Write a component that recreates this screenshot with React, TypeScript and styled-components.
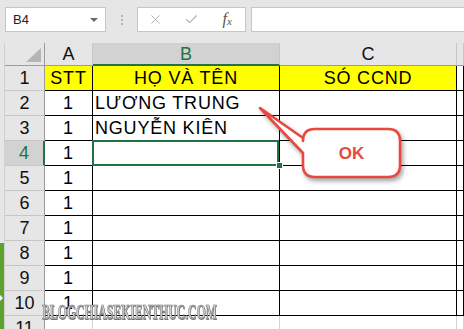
import React from 'react';
import styled, { createGlobalStyle, css } from 'styled-components';
import { X, Check } from 'lucide-react';

const GlobalStyle = createGlobalStyle`
    html, body {
        margin: 0;
        padding: 0;
        width: 464px;
        height: 329px;
        overflow: hidden;
        background: #ffffff;
        font-family: "Liberation Sans", Arial, sans-serif;
    }
`;

const GREEN = '#217346';
const RED = '#e8493f';

const Page = styled.div`
    position: relative;
    width: 464px;
    height: 329px;
    overflow: hidden;
`;

const TopBar = styled.div`
    height: 43px;
    box-sizing: border-box;
    background: #e6e6e6;
    display: flex;
    align-items: flex-start;
    padding: 7px 0 0 5px;
`;

const NameBox = styled.div`
    width: 101px;
    height: 25px;
    box-sizing: border-box;
    background: #ffffff;
    border: 1px solid #c6c6c6;
    display: flex;
    align-items: center;
    justify-content: space-between;
    padding: 0 7px 0 7px;
    font-size: 13px;
    color: #222;
`;

const Caret = styled.span`
    width: 0;
    height: 0;
    border-left: 4px solid transparent;
    border-right: 4px solid transparent;
    border-top: 4px solid #6a6a6a;
`;

const Grip = styled.div`
    width: 31px;
    height: 25px;
    display: flex;
    flex-direction: column;
    align-items: center;
    justify-content: center;
    gap: 2px;

    span {
        width: 2px;
        height: 2px;
        background: #b4b4b4;
    }
`;

const FxBox = styled.div`
    width: 109px;
    height: 25px;
    box-sizing: border-box;
    background: #ffffff;
    border: 1px solid #c6c6c6;
    display: flex;
`;

const FxSlot = styled.div`
    width: 36px;
    display: flex;
    align-items: center;
    justify-content: center;
    color: #b0b0b0;
`;

const FxLabel = styled.span`
    font-family: "Liberation Serif", "Times New Roman", serif;
    font-style: italic;
    font-size: 16px;
    color: #555;
    margin-top: -2px;

    sub {
        font-size: 11px;
        vertical-align: -1px;
    }
`;

const FormulaInput = styled.div`
    flex: 1;
    height: 25px;
    box-sizing: border-box;
    margin-left: 5px;
    margin-right: -4px;
    background: #ffffff;
    border: 1px solid #c6c6c6;
`;

const SheetArea = styled.div`
    display: flex;
    height: 286px;
`;

const LeftStrip = styled.div`
    width: 5px;
    display: flex;
    flex-direction: column;
    background: #e6e6e6;
    border-right: 1px solid #d0d0d0;
    box-sizing: border-box;
`;

const GreenTab = styled.div`
    margin-top: 200px;
    flex: 1;
    background: #5ea12f;
    position: relative;

    &::after {
        content: '';
        position: absolute;
        left: 0;
        top: 52px;
        border-top: 3px solid transparent;
        border-bottom: 3px solid transparent;
        border-left: 3px solid #ffffff;
    }
`;

const Grid = styled.div`
    flex: 1;
    display: grid;
    grid-template-columns: 40px 48px 187px 177px 1fr;
    grid-template-rows: 23px repeat(11, 25px);
    font-size: 18px;
    color: #000;
`;

const CornerCell = styled.div`
    background: #e6e6e6;
    border-right: 1px solid #9b9b9b;
    border-bottom: 1px solid #9b9b9b;
    position: relative;

    &::after {
        content: '';
        position: absolute;
        right: 3px;
        bottom: 3px;
        border-left: 15px solid transparent;
        border-bottom: 14px solid #b5b5b5;
    }
`;

const ColHeader = styled.div<{ $selected?: boolean }>`
    background: ${p => (p.$selected ? '#d2d2d2' : '#e6e6e6')};
    color: ${p => (p.$selected ? GREEN : '#111')};
    border-right: 1px solid #c6c6c6;
    border-bottom: ${p => (p.$selected ? `2px solid ${GREEN}` : '1px solid #9b9b9b')};
    display: flex;
    align-items: center;
    justify-content: center;
    padding-top: 1px;
    box-sizing: border-box;
`;

const RowHeader = styled.div<{ $selected?: boolean }>`
    background: ${p => (p.$selected ? '#d2d2d2' : '#e6e6e6')};
    color: ${p => (p.$selected ? GREEN : '#111')};
    border-bottom: 1px solid #c6c6c6;
    border-right: ${p => (p.$selected ? `2px solid ${GREEN}` : '1px solid #9b9b9b')};
    display: flex;
    align-items: center;
    justify-content: center;
    box-sizing: border-box;
`;

const Cell = styled.div<{ $yellow?: boolean; $align?: 'left' | 'center'; $ghost?: boolean; $selected?: boolean }>`
    position: relative;
    display: flex;
    align-items: center;
    justify-content: ${p => (p.$align === 'left' ? 'flex-start' : 'center')};
    padding-left: ${p => (p.$align === 'left' ? '2px' : '0')};
    background: ${p => (p.$yellow ? '#ffff00' : '#ffffff')};
    letter-spacing: 0.8px;
    white-space: nowrap;
    box-sizing: border-box;
    border-right: 1px solid ${p => (p.$ghost ? '#d4d4d4' : '#000')};
    border-bottom: ${p => (p.$ghost ? 'none' : '1px solid #000')};

    ${p => p.$selected && css`
        &::after {
            content: '';
            position: absolute;
            inset: -1px 0 -1px -1px;
            border: 2px solid ${GREEN};
        }
    `}
`;

const FillHandle = styled.span`
    position: absolute;
    right: -4px;
    bottom: -4px;
    width: 5px;
    height: 5px;
    background: ${GREEN};
    border: 1px solid #fff;
    z-index: 2;
`;

const CalloutSvg = styled.svg`
    position: absolute;
    left: 0;
    top: 0;
    pointer-events: none;
    filter: drop-shadow(2px 3px 2px rgba(0, 0, 0, 0.35));
`;

const CalloutText = styled.div`
    position: absolute;
    left: 303px;
    top: 129px;
    width: 97px;
    height: 48px;
    display: flex;
    align-items: center;
    justify-content: center;
    color: ${RED};
    font-weight: bold;
    font-size: 17px;
    padding-top: 1px;
    box-sizing: border-box;
`;

const Watermark = styled.div`
    position: absolute;
    left: 42px;
    top: 300px;
    font-family: "Liberation Serif", "Times New Roman", serif;
    font-weight: bold;
    font-size: 21px;
    color: #d4d4d4;
    -webkit-text-stroke: 0.7px #6e6e6e;
    text-shadow: 1px 1px 0 #7a7a7a;
    transform: scaleX(0.56);
    transform-origin: left top;
    white-space: nowrap;
`;

const columns = ['A', 'B', 'C', ''];

const rows: string[][] = [
    ['STT', 'HỌ VÀ TÊN', 'SÓ CCND', ''],
    ['1', 'LƯƠNG TRUNG', '', ''],
    ['1', 'NGUYỄN KIÊN', '', ''],
    ['1', '', '', ''],
    ['1', '', '', ''],
    ['1', '', '', ''],
    ['1', '', '', ''],
    ['1', '', '', ''],
    ['1', '', '', ''],
    ['1', '', '', ''],
];

const App: React.FC = () => {
    return (
        <Page>
            <GlobalStyle />
            <TopBar>
                <NameBox>
                    <span>B4</span>
                    <Caret />
                </NameBox>
                <Grip>
                    <span />
                    <span />
                    <span />
                </Grip>
                <FxBox>
                    <FxSlot><X size={15} strokeWidth={1.6} /></FxSlot>
                    <FxSlot><Check size={15} strokeWidth={1.8} /></FxSlot>
                    <FxSlot><FxLabel>f<sub>x</sub></FxLabel></FxSlot>
                </FxBox>
                <FormulaInput />
            </TopBar>

            <SheetArea>
                <LeftStrip>
                    <GreenTab />
                </LeftStrip>
                <Grid>
                    <CornerCell />
                    {columns.map((c, i) => (
                        <ColHeader key={i} $selected={c === 'B'}>{c}</ColHeader>
                    ))}

                    {rows.map((row, r) => (
                        <React.Fragment key={r}>
                            <RowHeader $selected={r === 3}>{r + 1}</RowHeader>
                            {row.map((value, c) => (
                                <Cell
                                    key={c}
                                    $yellow={r === 0 && c < 3}
                                    $align={c === 1 && r > 0 ? 'left' : 'center'}
                                    $selected={r === 3 && c === 1}
                                >
                                    {value}
                                    {r === 3 && c === 1 && <FillHandle />}
                                </Cell>
                            ))}
                        </React.Fragment>
                    ))}

                    <RowHeader>11</RowHeader>
                    {columns.map((_, c) => (
                        <Cell key={c} $ghost />
                    ))}
                </Grid>
            </SheetArea>

            <CalloutSvg width="464" height="329" viewBox="0 0 464 329">
                <path
                    d="M315,129 H388 Q400,129 400,141 V165 Q400,177 388,177 H315 Q303,177 303,165 V153 L260,108 L303,138 V141 Q303,129 315,129 Z"
                    fill="#ffffff"
                    stroke={RED}
                    strokeWidth="2.6"
                    strokeLinejoin="round"
                />
            </CalloutSvg>
            <CalloutText>OK</CalloutText>

            <Watermark>BLOGCHIASEKIENTHUC.COM</Watermark>
        </Page>
    );
};

export default App;
